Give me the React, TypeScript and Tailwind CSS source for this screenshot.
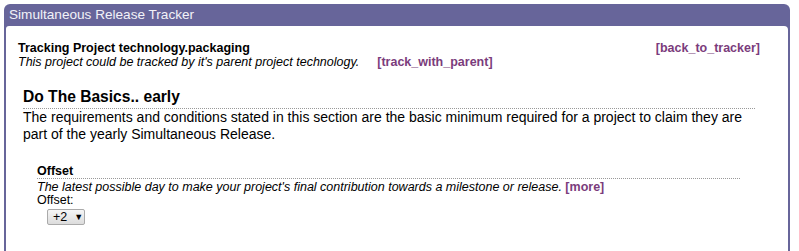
import React from 'react';

function App() {
  return (
    <div className="w-[799px] h-[251px] bg-white pt-[4px] pl-[4px] overflow-hidden font-['Liberation_Sans',Arial,sans-serif] text-black">
      <div className="w-[786px] rounded-t-[6px] bg-[#67659a]">
        <div className="h-[22px] px-[5px] text-[13.6px] leading-[22px] text-[#f2f2f8]">
          Simultaneous Release Tracker
        </div>
        <div className="mx-[2px] bg-white rounded-tl-[3px] rounded-tr-[4px] h-[230px] pt-[15px] pl-[12px] pr-[28px]">
          <div className="flex justify-between">
            <div>
              <div className="text-[12.5px] font-bold leading-[14px]">Tracking Project technology.packaging</div>
              <div className="text-[12.5px] italic leading-[14px]">
                This project could be tracked by it's parent project technology.
                <a href="#" className="not-italic font-bold text-[#7b3c7c] ml-[18px]">[track_with_parent]</a>
              </div>
            </div>
            <a href="#" className="text-[12.5px] font-bold leading-[14px] text-[#7b3c7c]">[back_to_tracker]</a>
          </div>

          <div className="mt-[18px] ml-[5px] mr-[5px]">
            <div className="text-[15.6px] font-bold leading-[20px] border-b border-dotted border-[#999] pb-[1px]">
              Do The Basics.. early
            </div>
            <p className="text-[14px] leading-[17px]">
              The requirements and conditions stated in this section are the basic minimum required for a project to claim they are part of the yearly Simultaneous Release.
            </p>

            <div className="mt-[21px] ml-[14px] mr-[15px]">
              <div className="text-[12.5px] font-bold leading-[14px] border-b border-dotted border-[#999]">Offset</div>
              <div className="text-[12.5px] italic leading-[14px] pt-[1px]">
                The latest possible day to make your project's final contribution towards a milestone or release.{' '}
                <a href="#" className="not-italic font-bold text-[#7b3c7c]">[more]</a>
              </div>
              <div className="text-[12.5px] leading-[13px]">Offset:</div>
              <div className="ml-[10px] mt-[2px] flex items-center gap-[7px] h-[16px] w-[38px] pl-[5px] border border-[#aaa] rounded-[2px] bg-gradient-to-b from-[#f6f6f6] to-[#dcdcdc] text-[12.5px] leading-none">
                <span>+2</span>
                <span className="text-[9px]">▼</span>
              </div>
            </div>
          </div>
        </div>
      </div>
    </div>
  );
}

export default App;
